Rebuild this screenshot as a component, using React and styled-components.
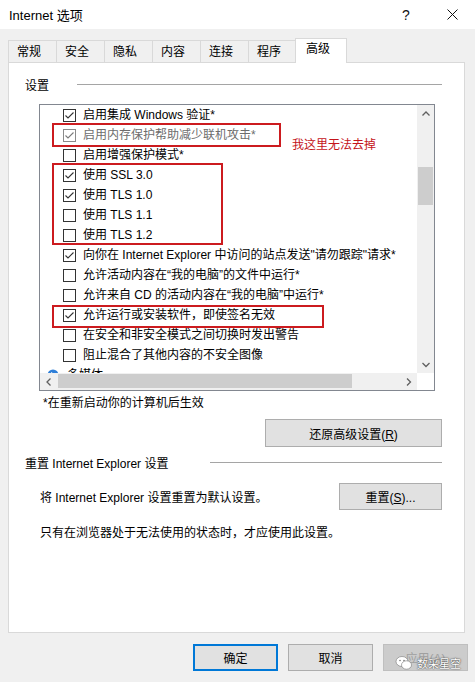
import React from "react";
import styled, { createGlobalStyle } from "styled-components";

const GlobalStyle = createGlobalStyle`
  html, body {
    margin: 0;
    padding: 0;
    background: #f0f0f0;
  }
  body {
    font-family: "Liberation Sans", "Noto Sans CJK SC", sans-serif;
    font-size: 12px;
    color: #000;
  }
`;

const Window = styled.div`
  position: relative;
  width: 475px;
  height: 682px;
  display: flex;
  flex-direction: column;
  background: #f0f0f0;
  overflow: hidden;
`;

const TitleBar = styled.div`
  height: 29px;
  flex-shrink: 0;
  display: flex;
  align-items: center;
  padding-left: 9px;
  background: #fff;
`;

const Title = styled.div`
  flex: 1;
  font-size: 13px;
`;

const TitleButton = styled.div`
  width: 46px;
  height: 29px;
  display: flex;
  align-items: center;
  justify-content: center;
  font-size: 14px;
  color: #111;
`;

const Body = styled.div`
  flex: 1;
  display: flex;
  flex-direction: column;
  padding: 9px 7px 0 8px;
`;

const TabBar = styled.div`
  height: 24px;
  display: flex;
  align-items: flex-end;
`;

const Tab = styled.div`
  position: relative;
  box-sizing: border-box;
  width: ${(p) => p.$w}px;
  height: ${(p) => (p.$active ? 25 : 22)}px;
  margin-left: -1px;
  margin-bottom: ${(p) => (p.$active ? -1 : 0)}px;
  padding: ${(p) => (p.$active ? "2px 0 0 10px" : "3px 0 0 8px")};
  border: 1px solid #d9d9d9;
  border-bottom: none;
  background: ${(p) => (p.$active ? "#fff" : "#f0f0f0")};
  z-index: ${(p) => (p.$active ? 1 : 0)};
  line-height: 16px;
  &:first-child {
    margin-left: 0;
  }
`;

const Panel = styled.div`
  box-sizing: border-box;
  width: 457px;
  height: 571px;
  display: flex;
  flex-direction: column;
  padding: 0 22px 0 16px;
  border: 1px solid #d9d9d9;
  background: #fff;
`;

const GroupHeader = styled.div`
  height: 18px;
  margin-top: ${(p) => p.$top}px;
  display: flex;
  align-items: center;
  line-height: 18px;
`;

const GroupLine = styled.div`
  flex: 1;
  height: 1px;
  margin: -3px 0 0 ${(p) => p.$gap}px;
  background: #a5a5a5;
`;

const ListBox = styled.div`
  box-sizing: border-box;
  width: 396px;
  height: 287px;
  margin: 9px 0 0 14px;
  display: grid;
  grid-template-columns: 1fr 17px;
  grid-template-rows: 1fr 17px;
  border: 1px solid #828790;
  background: #fff;
`;

const ListContent = styled.div`
  position: relative;
  overflow: hidden;
`;

const Row = styled.div`
  height: 20px;
  display: flex;
  align-items: center;
  padding-left: ${(p) => (p.$group ? 6 : 23)}px;
  white-space: nowrap;
  line-height: 20px;
  color: ${(p) => (p.$disabled ? "#6d6d6d" : "#000")};
`;

const CheckBox = styled.span`
  box-sizing: border-box;
  width: 13px;
  height: 13px;
  flex-shrink: 0;
  margin-right: 7px;
  display: flex;
  align-items: center;
  justify-content: center;
  border: 1px solid ${(p) => (p.$disabled ? "#8a8a8a" : "#333")};
  background: #fff;
`;

const GroupIcon = styled.span`
  width: 14px;
  height: 14px;
  margin-right: 7px;
  display: flex;
`;

const RedFrame = styled.div`
  position: absolute;
  left: ${(p) => p.$x}px;
  top: ${(p) => p.$y}px;
  width: ${(p) => p.$w}px;
  height: ${(p) => p.$h}px;
  box-sizing: border-box;
  border: 2px solid #cc1b1f;
  pointer-events: none;
`;

const RedNote = styled.div`
  position: absolute;
  left: 252px;
  top: 32px;
  line-height: 16px;
  color: #c4141a;
  white-space: nowrap;
`;

const VScroll = styled.div`
  display: flex;
  flex-direction: column;
  background: #f0f0f0;
`;

const HScroll = styled.div`
  display: flex;
  background: #f0f0f0;
`;

const Corner = styled.div`
  background: #fff;
`;

const ArrowButton = styled.div`
  width: 17px;
  height: 17px;
  flex-shrink: 0;
  display: flex;
  align-items: center;
  justify-content: center;
`;

const VTrack = styled.div`
  flex: 1;
  padding: 0 1px;
`;

const VThumb = styled.div`
  height: ${(p) => p.$size}px;
  margin-top: ${(p) => p.$offset}px;
  background: #cdcdcd;
`;

const HTrack = styled.div`
  flex: 1;
  padding: 1px 0 2px;
  display: flex;
`;

const HThumb = styled.div`
  width: ${(p) => p.$size}px;
  margin-left: ${(p) => p.$offset}px;
  background: #cdcdcd;
`;

const Note = styled.div`
  margin: ${(p) => p.$top}px 0 0 ${(p) => p.$left}px;
  line-height: 16px;
`;

const Button = styled.button`
  box-sizing: border-box;
  width: ${(p) => p.$w}px;
  height: ${(p) => p.$h || 27}px;
  padding: 0;
  font: inherit;
  color: ${(p) => (p.$disabled ? "#a0a0a0" : "#000")};
  background: ${(p) => (p.$disabled ? "#cccccc" : "#e1e1e1")};
  border: ${(p) =>
    p.$primary ? "2px solid #0078d7" : p.$disabled ? "1px solid #bfbfbf" : "1px solid #adadad"};
  cursor: default;
`;

const RestoreRow = styled.div`
  display: flex;
  justify-content: flex-end;
  margin-top: 8px;
`;

const ResetRow = styled.div`
  display: flex;
  align-items: center;
  justify-content: space-between;
  margin-top: 10px;
  padding-left: 15px;
`;

const DialogButtons = styled.div`
  display: flex;
  justify-content: flex-end;
  gap: 10px;
  margin-top: 11px;
`;

const Watermark = styled.div`
  position: absolute;
  right: 14px;
  bottom: 11px;
  display: flex;
  align-items: center;
  gap: 4px;
  color: #fff;
  font-size: 11px;
  text-shadow: 0 0 2px #444, 0 0 1px #444;
  pointer-events: none;
`;

const rows = [
  { label: "启用集成 Windows 验证*", checked: true },
  { label: "启用内存保护帮助减少联机攻击*", checked: true, disabled: true },
  { label: "启用增强保护模式*", checked: false },
  { label: "使用 SSL 3.0", checked: true },
  { label: "使用 TLS 1.0", checked: true },
  { label: "使用 TLS 1.1", checked: false },
  { label: "使用 TLS 1.2", checked: false },
  { label: "向你在 Internet Explorer 中访问的站点发送\"请勿跟踪\"请求*", checked: true },
  { label: "允许活动内容在“我的电脑”的文件中运行*", checked: false },
  { label: "允许来自 CD 的活动内容在“我的电脑”中运行*", checked: false },
  { label: "允许运行或安装软件，即使签名无效", checked: true },
  { label: "在安全和非安全模式之间切换时发出警告", checked: false },
  { label: "阻止混合了其他内容的不安全图像", checked: false },
];

const tabs = [
  { label: "常规", w: 49 },
  { label: "安全", w: 49 },
  { label: "隐私", w: 49 },
  { label: "内容", w: 49 },
  { label: "连接", w: 49 },
  { label: "程序", w: 48 },
  { label: "高级", w: 52, active: true },
];

function Check({ color }) {
  return (
    <svg width="11" height="11" viewBox="0 0 11 11">
      <polyline points="1.5,5.5 4,8 9.5,2.5" fill="none" stroke={color} strokeWidth="1.1" />
    </svg>
  );
}

function Chevron({ dir }) {
  const pts = {
    up: "0.5,4.5 4,1 7.5,4.5",
    down: "0.5,1 4,4.5 7.5,1",
    left: "4.5,0.5 1,4 4.5,7.5",
    right: "1,0.5 4.5,4 1,7.5",
  }[dir];
  const vertical = dir === "up" || dir === "down";
  return (
    <svg width={vertical ? 8 : 6} height={vertical ? 6 : 8} viewBox={vertical ? "0 0 8 6" : "0 0 6 8"}>
      <polyline points={pts} fill="none" stroke="#606060" strokeWidth="1.3" />
    </svg>
  );
}

function App() {
  return (
    <>
      <GlobalStyle />
      <Window>
        <TitleBar>
          <Title>Internet 选项</Title>
          <TitleButton>?</TitleButton>
          <TitleButton>
            <svg width="11" height="11" viewBox="0 0 11 11">
              <path d="M0.5 0.5 L10.5 10.5 M10.5 0.5 L0.5 10.5" stroke="#111" strokeWidth="1" />
            </svg>
          </TitleButton>
        </TitleBar>

        <Body>
          <TabBar>
            {tabs.map((t) => (
              <Tab key={t.label} $w={t.w} $active={t.active}>
                {t.label}
              </Tab>
            ))}
          </TabBar>

          <Panel>
            <GroupHeader $top={14}>
              设置
              <GroupLine $gap={28} />
            </GroupHeader>

            <ListBox>
              <ListContent>
                {rows.map((r) => (
                  <Row key={r.label} $disabled={r.disabled}>
                    <CheckBox $disabled={r.disabled}>
                      {r.checked && <Check color={r.disabled ? "#7a7a7a" : "#333"} />}
                    </CheckBox>
                    {r.label}
                  </Row>
                ))}
                <Row $group>
                  <GroupIcon>
                    <svg width="14" height="14" viewBox="0 0 14 14">
                      <circle cx="7" cy="7" r="5.5" fill="#2f7fd8" />
                      <path d="M5 4 L10 7 L5 10 Z" fill="#fff" />
                    </svg>
                  </GroupIcon>
                  多媒体
                </Row>

                <RedFrame $x={12} $y={18} $w={229} $h={24} />
                <RedFrame $x={12} $y={58} $w={171} $h={82} />
                <RedFrame $x={12} $y={200} $w={272} $h={23} />
                <RedNote>我这里无法去掉</RedNote>
              </ListContent>

              <VScroll>
                <ArrowButton>
                  <Chevron dir="up" />
                </ArrowButton>
                <VTrack>
                  <VThumb $offset={45} $size={38} />
                </VTrack>
                <ArrowButton>
                  <Chevron dir="down" />
                </ArrowButton>
              </VScroll>

              <HScroll>
                <ArrowButton>
                  <Chevron dir="left" />
                </ArrowButton>
                <HTrack>
                  <HThumb $offset={1} $size={294} />
                </HTrack>
                <ArrowButton>
                  <Chevron dir="right" />
                </ArrowButton>
              </HScroll>
              <Corner />
            </ListBox>

            <Note $top={4} $left={18}>
              *在重新启动你的计算机后生效
            </Note>

            <RestoreRow>
              <Button $w={177} $h={28}>
                还原高级设置(<u>R</u>)
              </Button>
            </RestoreRow>

            <GroupHeader $top={8}>
              重置 Internet Explorer 设置
              <GroupLine $gap={42} />
            </GroupHeader>

            <ResetRow>
              将 Internet Explorer 设置重置为默认设置。
              <Button $w={103}>
                重置(<u>S</u>)...
              </Button>
            </ResetRow>

            <Note $top={15} $left={15}>
              只有在浏览器处于无法使用的状态时，才应使用此设置。
            </Note>
          </Panel>

          <DialogButtons>
            <Button $w={85} $primary>
              确定
            </Button>
            <Button $w={85}>取消</Button>
            <Button $w={85} $disabled>
              应用(<u>A</u>)
            </Button>
          </DialogButtons>
        </Body>

        <Watermark>
          <svg width="18" height="16" viewBox="0 0 18 16">
            <ellipse cx="7" cy="6.5" rx="6" ry="5" fill="#fff" stroke="#777" strokeWidth="0.6" />
            <ellipse cx="11.5" cy="10" rx="5" ry="4.2" fill="#fff" stroke="#777" strokeWidth="0.6" />
            <circle cx="5" cy="5.5" r="0.8" fill="#777" />
            <circle cx="9" cy="5.5" r="0.8" fill="#777" />
          </svg>
          数采星空
        </Watermark>
      </Window>
    </>
  );
}

export default App;
